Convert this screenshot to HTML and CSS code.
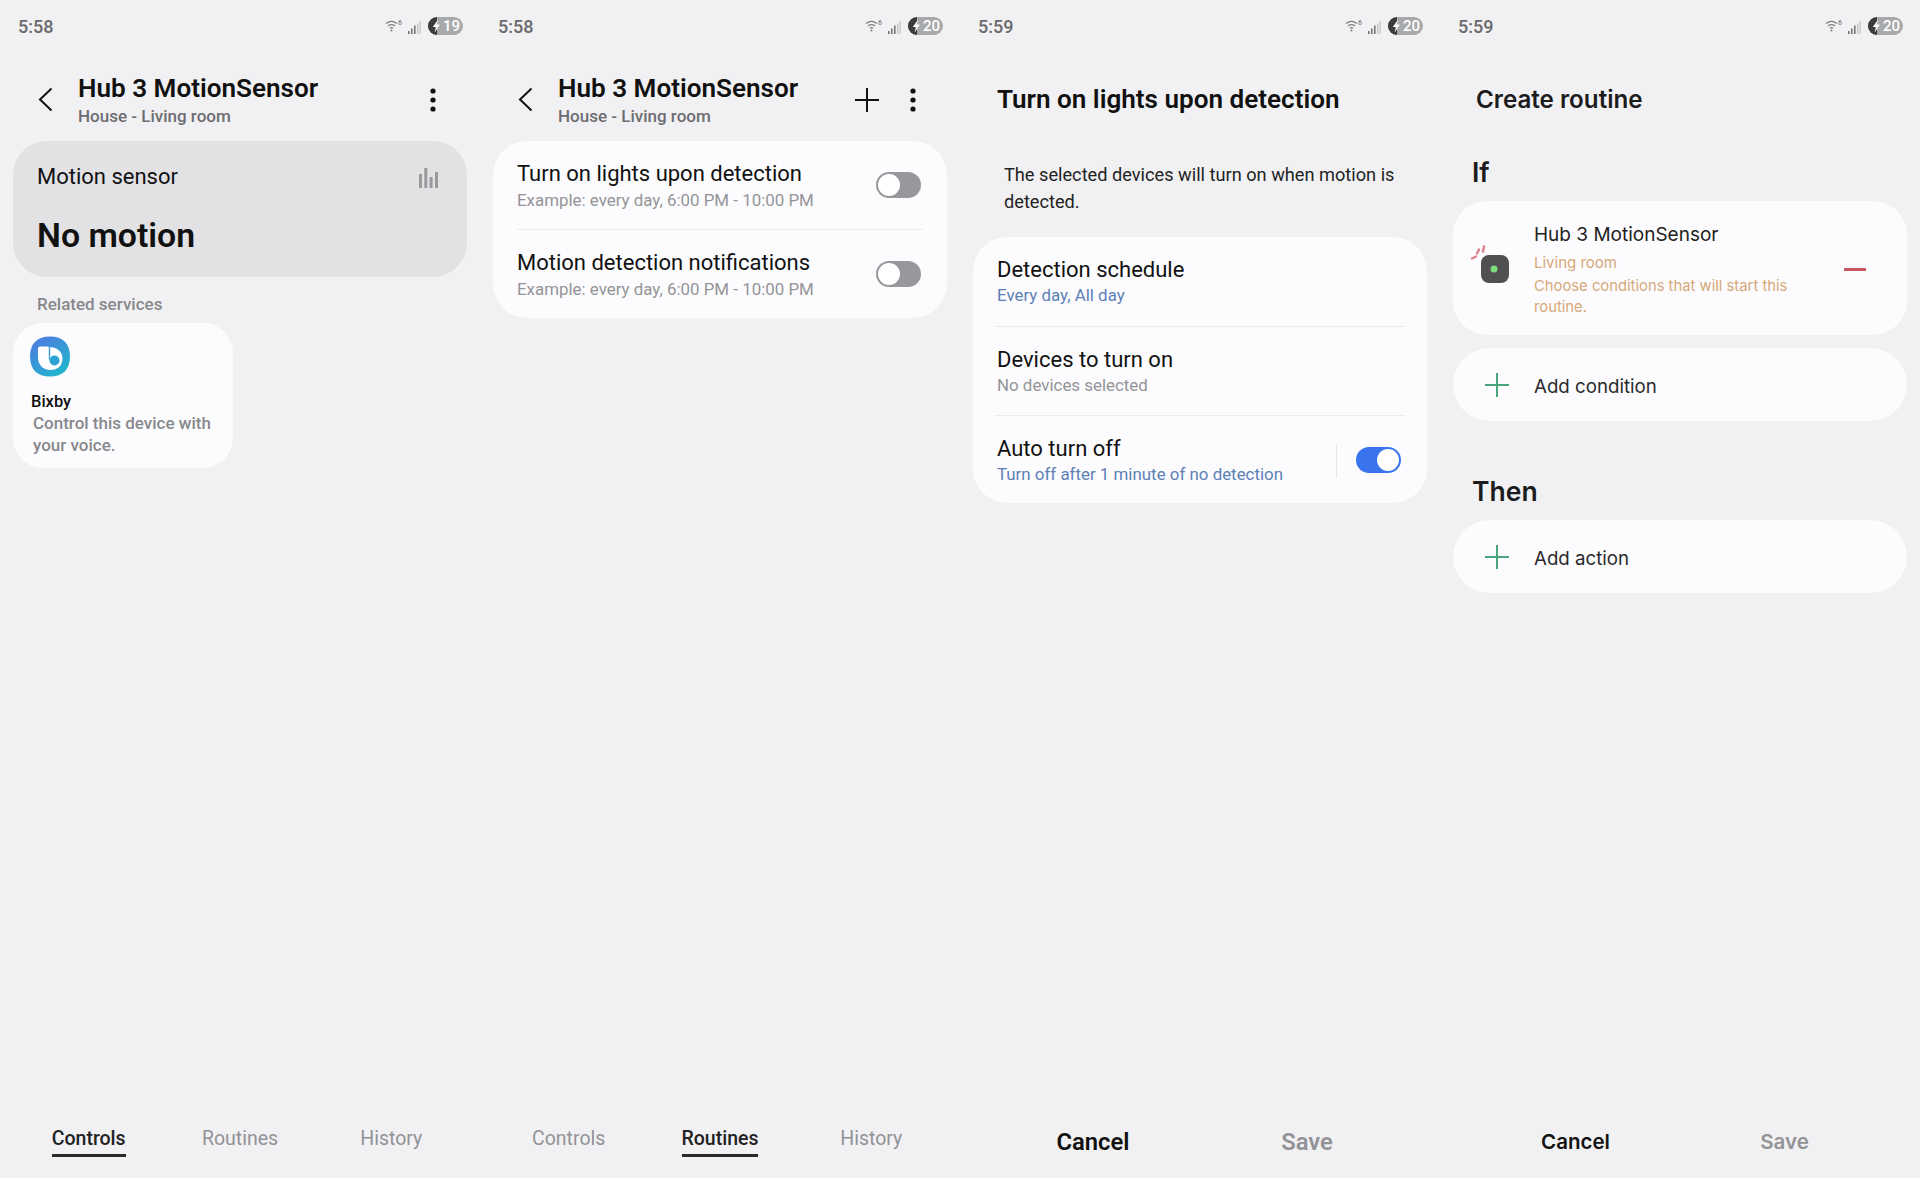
FILE: index.html
```html
<!DOCTYPE html>
<html lang="en">
<head>
    <meta charset="UTF-8">
    <title>Hub 3 MotionSensor</title>
    <link rel="stylesheet" href="styles.css">
</head>
<body>
    <!-- shared icons -->
    <svg class="icon-defs" aria-hidden="true">
        <symbol id="wifi" viewBox="0 0 13 12">
            <path d="M1 3.600C4.400 .9 8.600 .9 12 3.600M3 6C5.200 4.300 7.800 4.300 10 6M5 8.300C6 7.500 7 7.500 8 8.300" fill="none" stroke="#7b7b7e" stroke-width="1.200"/>
            <circle cx="6.500" cy="10.600" r="1" fill="#7b7b7e"/>
        </symbol>
        <symbol id="signal" viewBox="0 0 13 13">
            <rect x="0" y="10" width="1.600" height="3" fill="#77777a"/>
            <rect x="3" y="7.500" width="1.600" height="5.500" fill="#77777a"/>
            <rect x="6" y="4.500" width="1.600" height="8.500" fill="#77777a"/>
            <rect x="9" y="2.500" width="1.400" height="10.500" fill="#c6c6c8"/>
            <rect x="11.400" y="0" width="1.400" height="13" fill="#c6c6c8"/>
        </symbol>
        <symbol id="bolt" viewBox="0 0 14 18">
            <path d="M9 0A9 9 0 0 0 9 18Z" fill="#3b3b3d"/>
            <path d="M10 2.500L4.800 10H7.800L6.600 15.500L12 7.500H8.800Z" fill="#fff"/>
        </symbol>
        <symbol id="back" viewBox="0 0 15 25">
            <path d="M13.500 1.500L2 12.500L13.500 23.500" fill="none" stroke="#111" stroke-width="2"/>
        </symbol>
        <symbol id="dots" viewBox="0 0 6 24">
            <circle cx="3" cy="3" r="2.600" fill="#111"/>
            <circle cx="3" cy="12" r="2.600" fill="#111"/>
            <circle cx="3" cy="21" r="2.600" fill="#111"/>
        </symbol>
        <symbol id="plus" viewBox="0 0 24 24">
            <path d="M12 0V24M0 12H24" fill="none" stroke="currentColor" stroke-width="2"/>
        </symbol>
    </svg>

    <!-- controls tab -->
    <section class="phone">
        <div class="status">
            <span class="time">5:58</span>
            <svg class="wifi"><use href="#wifi"/></svg><span class="wifi-gen">6</span>
            <svg class="signal"><use href="#signal"/></svg>
            <span class="battery"><svg class="bolt"><use href="#bolt"/></svg>19</span>
        </div>
        <header class="header">
            <svg class="back"><use href="#back"/></svg>
            <div class="header-text">
                <h1>Hub 3 MotionSensor</h1>
                <p>House - Living room</p>
            </div>
            <svg class="dots"><use href="#dots"/></svg>
        </header>
        <div class="motion-card">
            <div class="motion-top">
                <span>Motion sensor</span>
                <svg class="chart" viewBox="0 0 19 20">
                    <rect x="0" y="6" width="3" height="14"/>
                    <rect x="5.300" y="0" width="3" height="20"/>
                    <rect x="10.600" y="9" width="3" height="11"/>
                    <rect x="16" y="4" width="3" height="16"/>
                </svg>
            </div>
            <div class="motion-state">No motion</div>
        </div>
        <div class="related">Related services</div>
        <div class="service-card">
            <svg class="bixby" viewBox="0 0 40 40">
                <defs>
                    <linearGradient id="bixbyFill" x1="0.1" y1="0" x2="0.8" y2="1">
                        <stop offset="0" stop-color="#4f78e2"/>
                        <stop offset="1" stop-color="#20b8cb"/>
                    </linearGradient>
                </defs>
                <path d="M20 0C33 0 40 7 40 20S33 40 20 40S0 33 0 20S7 0 20 0Z" fill="url(#bixbyFill)"/>
                <path d="M10 10H18.500V10.500C27 10.500 32.500 15 32.500 22C32.500 29 27.500 33.500 20.500 33.500C13 33.500 8 28 8 21V12A2 2 0 0 1 10 10Z" fill="#fff"/>
                <path d="M19.500 10V23" stroke="#3f9ddf" stroke-width="1.400"/>
                <circle cx="24.500" cy="24" r="5" fill="#2ba4d4"/>
            </svg>
            <div class="service-name">Bixby</div>
            <p class="service-desc">Control this device with your voice.</p>
        </div>
        <nav class="tabs">
            <span class="tab tab-active">Controls</span>
            <span class="tab">Routines</span>
            <span class="tab">History</span>
        </nav>
    </section>

    <!-- routines tab -->
    <section class="phone">
        <div class="status">
            <span class="time">5:58</span>
            <svg class="wifi"><use href="#wifi"/></svg><span class="wifi-gen">6</span>
            <svg class="signal"><use href="#signal"/></svg>
            <span class="battery"><svg class="bolt"><use href="#bolt"/></svg>20</span>
        </div>
        <header class="header">
            <svg class="back"><use href="#back"/></svg>
            <div class="header-text">
                <h1>Hub 3 MotionSensor</h1>
                <p>House - Living room</p>
            </div>
            <svg class="plus"><use href="#plus"/></svg>
            <svg class="dots dots-after-plus"><use href="#dots"/></svg>
        </header>
        <div class="list">
            <div class="row">
                <div class="row-text">
                    <div class="row-title">Turn on lights upon detection</div>
                    <div class="row-sub">Example: every day, 6:00 PM - 10:00 PM</div>
                </div>
                <span class="toggle"></span>
            </div>
            <div class="row">
                <div class="row-text">
                    <div class="row-title">Motion detection notifications</div>
                    <div class="row-sub">Example: every day, 6:00 PM - 10:00 PM</div>
                </div>
                <span class="toggle"></span>
            </div>
        </div>
        <nav class="tabs">
            <span class="tab">Controls</span>
            <span class="tab tab-active">Routines</span>
            <span class="tab">History</span>
        </nav>
    </section>

    <!-- lights detail -->
    <section class="phone">
        <div class="status">
            <span class="time">5:59</span>
            <svg class="wifi"><use href="#wifi"/></svg><span class="wifi-gen">6</span>
            <svg class="signal"><use href="#signal"/></svg>
            <span class="battery"><svg class="bolt"><use href="#bolt"/></svg>20</span>
        </div>
        <h2 class="page-title">Turn on lights upon detection</h2>
        <p class="intro">The selected devices will turn on when motion is detected.</p>
        <div class="list list-wide">
            <div class="row">
                <div class="row-text">
                    <div class="row-title">Detection schedule</div>
                    <div class="row-sub row-sub-blue">Every day, All day</div>
                </div>
            </div>
            <div class="row">
                <div class="row-text">
                    <div class="row-title">Devices to turn on</div>
                    <div class="row-sub">No devices selected</div>
                </div>
            </div>
            <div class="row">
                <div class="row-text">
                    <div class="row-title">Auto turn off</div>
                    <div class="row-sub row-sub-blue">Turn off after 1 minute of no detection</div>
                </div>
                <span class="row-sep"></span>
                <span class="toggle toggle-on"></span>
            </div>
        </div>
        <div class="actions">
            <span class="action">Cancel</span>
            <span class="action action-off">Save</span>
        </div>
    </section>

    <!-- create routine -->
    <section class="phone phone-routine">
        <div class="status">
            <span class="time">5:59</span>
            <svg class="wifi"><use href="#wifi"/></svg><span class="wifi-gen">6</span>
            <svg class="signal"><use href="#signal"/></svg>
            <span class="battery"><svg class="bolt"><use href="#bolt"/></svg>20</span>
        </div>
        <h2 class="routine-title">Create routine</h2>
        <h3 class="block-title block-if">If</h3>
        <div class="condition">
            <svg class="sensor" viewBox="0 0 40 48">
                <path d="M3 13.500L7 11.500M8 8.500L10 4.500M14 6.500L15 1.500" fill="none" stroke="#d9808a" stroke-width="2.400" stroke-linecap="round"/>
                <rect x="12" y="10" width="28" height="28" rx="8" fill="#505053"/>
                <circle cx="25" cy="24" r="3.500" fill="#7fdc7c"/>
            </svg>
            <div class="condition-text">
                <div class="condition-name">Hub 3 MotionSensor</div>
                <div class="condition-room">Living room</div>
                <div class="condition-hint">Choose conditions that will start this routine.</div>
            </div>
            <span class="minus"></span>
        </div>
        <div class="add-row add-condition">
            <svg class="add-plus"><use href="#plus"/></svg>
            <span>Add condition</span>
        </div>
        <h3 class="block-title block-then">Then</h3>
        <div class="add-row">
            <svg class="add-plus"><use href="#plus"/></svg>
            <span>Add action</span>
        </div>
        <div class="actions actions-small">
            <span class="action">Cancel</span>
            <span class="action action-off">Save</span>
        </div>
    </section>
</body>
</html>
```
FILE: styles.css
```css
* {
    box-sizing: border-box;
}
html, body {
    margin: 0;
    height: 1178px;
    overflow: hidden;
}
body {
    display: flex;
    font-family: Roboto, "Liberation Sans", sans-serif;
    background-color: #f1f1f3;
    color: #111;
}
h1, h2, h3, p {
    margin: 0;
    font-weight: normal;
}
.icon-defs {
    position: absolute;
    width: 0;
    height: 0;
}
.phone {
    width: 480px;
    height: 1178px;
    display: flex;
    flex-direction: column;
}

/* status bar */
.status {
    height: 52px;
    flex: none;
    display: flex;
    align-items: center;
    padding: 0 17px 0 18px;
}
.time {
    font-size: 18px;
    font-weight: 500;
    color: #69696c;
    margin-right: auto;
}
.wifi {
    width: 13px;
    height: 12px;
}
.wifi-gen {
    width: 4px;
    height: 12px;
    font-size: 7px;
    line-height: 7px;
    font-weight: 500;
    color: #7b7b7e;
}
.signal {
    width: 13px;
    height: 13px;
    margin: 2px 7px 0 6px;
}
.battery {
    width: 35px;
    height: 18px;
    border-radius: 9px;
    background-color: #a9a9ab;
    color: #fff;
    font-size: 15px;
    font-weight: 500;
    line-height: 18px;
    display: flex;
}
.bolt {
    width: 14px;
    height: 18px;
    margin-right: 1px;
}

/* top bar */
.header {
    height: 55px;
    margin-top: 20px;
    padding: 0 44px 0 38px;
    display: flex;
    align-items: center;
    flex: none;
}
.back {
    width: 15px;
    height: 25px;
    margin: 0 25px 0 0;
}
.header-text h1 {
    font-size: 26.100px;
    line-height: 32px;
    font-weight: 600;
}
.header-text p {
    font-size: 17px;
    line-height: 22px;
    margin-top: 1px;
    font-weight: 500;
    color: #6d6d72;
}
.dots {
    width: 6px;
    height: 24px;
    margin: 0 0 0 auto;
}
.plus {
    width: 24px;
    height: 24px;
    margin: 0 0 0 auto;
    color: #111;
}
.dots-after-plus {
    margin-left: 31px;
}

/* first screen */
.motion-card {
    margin: 14px 13px 0;
    height: 136px;
    padding: 22px 24px 0;
    border-radius: 34px;
    background-color: #e2e2e5;
}
.motion-top {
    display: flex;
    justify-content: space-between;
    align-items: center;
    font-size: 22px;
    line-height: 28px;
}
.chart {
    width: 19px;
    height: 20px;
    margin: 2px 5px 0 0;
    fill: #9a9a9d;
}
.motion-state {
    margin-top: 23px;
    font-size: 33.800px;
    line-height: 44px;
    font-weight: 600;
}
.related {
    margin: 16px 0 0 37px;
    font-size: 17px;
    line-height: 22px;
    font-weight: 500;
    color: #88888c;
}
.service-card {
    margin: 8px 0 0 13px;
    width: 220px;
    height: 145px;
    padding: 13px 12px 0 18px;
    border-radius: 30px;
    background-color: #fcfcfe;
}
.bixby {
    display: block;
    width: 40px;
    height: 41px;
    margin-left: -1px;
}
.service-name {
    margin-top: 14px;
    font-size: 16.500px;
    line-height: 22px;
    font-weight: 500;
}
.service-desc {
    margin: -1px 0 0 2px;
    font-size: 17px;
    line-height: 22px;
    font-weight: 500;
    color: #88888c;
}

/* lists */
.list {
    margin: 14px 13px 0;
    border-radius: 34px;
    background-color: #fcfcfe;
}
.row {
    margin: 0 24px;
    padding: 19px 0 18px;
    display: flex;
    align-items: center;
    border-bottom: 1px solid #ececee;
}
.row:last-child {
    border-bottom: none;
}
.row-text {
    flex: 1;
}
.row-title {
    font-size: 22px;
    line-height: 28px;
}
.row-sub {
    font-size: 16.900px;
    line-height: 22px;
    margin-top: 1px;
    color: #949498;
}
.row-sub-blue {
    color: #5d80b6;
}
.row-sep {
    width: 1px;
    height: 34px;
    margin-right: 19px;
    background-color: #e6e6e8;
}
.toggle {
    width: 45px;
    height: 26px;
    margin: -2px 2px 0 0;
    padding: 2px;
    border-radius: 13px;
    background-color: #98989c;
    display: flex;
}
.toggle::after {
    content: "";
    width: 22px;
    height: 22px;
    border-radius: 50%;
    background-color: #fff;
}
.toggle-on {
    background-color: #3a74ec;
    justify-content: flex-end;
}
.list-wide {
    margin-top: 22px;
}
.list-wide .row {
    margin: 0 22px;
    padding-left: 2px;
}
.list-wide .row:first-child {
    padding-bottom: 19px;
}
.list-wide .row:last-child {
    padding-bottom: 17px;
}
.list-wide .row-sub {
    margin-top: 0;
    padding-bottom: 1px;
}
.list-wide .toggle {
    margin-right: 4px;
}

/* detail screen */
.page-title {
    margin: 31px 0 0 37px;
    font-size: 26.100px;
    line-height: 32px;
    font-weight: 600;
}
.intro {
    margin: 46px 30px 0 44px;
    font-size: 18.200px;
    line-height: 27px;
    color: #222;
}
.actions {
    margin-top: auto;
    padding: 0 26px 21px;
    display: grid;
    grid-template-columns: 1fr 1fr;
    text-align: center;
    font-size: 23.800px;
    line-height: 30px;
    font-weight: 600;
}
.action-off {
    color: #939397;
}
.actions-small {
    padding: 0 31px 21px;
    font-family: Inter, Roboto, sans-serif;
    font-size: 20.500px;
}

/* bottom tabs */
.tabs {
    margin: auto 13px 0;
    padding-bottom: 21px;
    display: grid;
    grid-template-columns: repeat(3, 1fr);
    justify-items: center;
}
.tab {
    font-size: 19.500px;
    line-height: 24px;
    padding-bottom: 3px;
    border-bottom: 3px solid transparent;
    color: #929296;
}
.tab-active {
    font-weight: 500;
    color: #222;
    border-bottom-color: #2b2b2e;
}

/* routine screen */
.phone-routine {
    font-family: Inter, Roboto, sans-serif;
}
.phone-routine .status {
    font-family: Roboto, sans-serif;
}
.routine-title {
    margin: 32px 0 0 36px;
    font-size: 24.200px;
    line-height: 32px;
    font-weight: 600;
    color: #1c1c1e;
}
.block-title {
    margin-left: 32px;
    font-size: 26.500px;
    line-height: 36px;
    font-weight: 600;
    color: #1c1c1e;
}
.block-if {
    margin-top: 38px;
}
.block-then {
    margin-top: 52px;
}
.condition {
    margin: 11px 13px 0;
    height: 134px;
    padding: 19px 41px 17px 16px;
    border-radius: 34px;
    background-color: #fcfcfe;
    display: flex;
    align-items: center;
}
.sensor {
    width: 40px;
    height: 48px;
    flex: none;
    margin-right: 25px;
}
.condition-text {
    flex: 1;
    padding-top: 1px;
}
.condition-name {
    font-size: 19px;
    line-height: 26px;
    color: #222;
}
.condition-room {
    margin-top: 4px;
    font-size: 15px;
    line-height: 21px;
    color: #d6a878;
}
.condition-hint {
    margin-top: 3px;
    width: 270px;
    font-size: 14.800px;
    line-height: 21px;
    color: #d6a878;
}
.minus {
    width: 22px;
    height: 3px;
    background-color: #c4585e;
}
.add-row {
    margin: 11px 13px 0;
    height: 73px;
    padding: 3px 0 0 32px;
    border-radius: 37px;
    background-color: #fcfcfe;
    display: flex;
    align-items: center;
    font-size: 18.700px;
    color: #2a2a2c;
}
.add-condition {
    margin-top: 13px;
    height: 73px;
}
.add-plus {
    width: 24px;
    height: 24px;
    margin: -3px 25px 0 0;
    color: #4aa77d;
}
```
